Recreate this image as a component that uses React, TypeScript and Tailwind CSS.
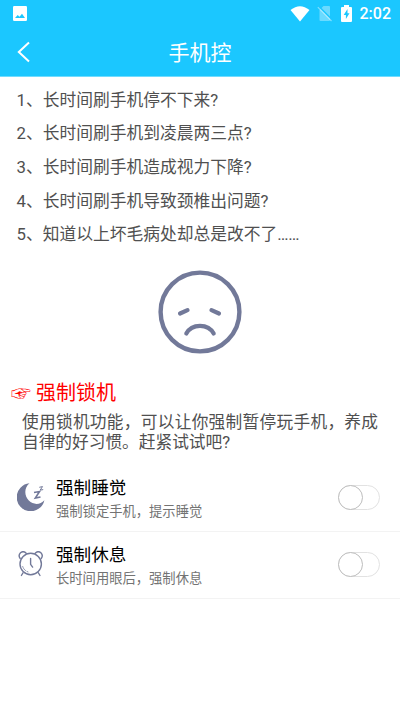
import React from 'react';

interface LockItem {
  title: string;
  desc: string;
  icon: React.ReactNode;
}

const HABITS = [
  '1、长时间刷手机停不下来?',
  '2、长时间刷手机到凌晨两三点?',
  '3、长时间刷手机造成视力下降?',
  '4、长时间刷手机导致颈椎出问题?',
  '5、知道以上坏毛病处却总是改不了……',
];

function StatusBar() {
  return (
    <div className="flex h-7 items-center justify-between pl-[13px] pr-[9px]">
      <svg width="14" height="15" viewBox="0 0 14 15" className="-mt-px">
        <rect width="14" height="15" rx="1.2" fill="#fff" />
        <path d="M2 12l2.700-3 1.800 1.700 2.500-3L12 12z" fill="#1bc7ff" />
      </svg>
      <div className="flex items-center text-white">
        <svg width="20" height="16" viewBox="0 0 20 16" className="-mt-px">
          <path d="M.5 4Q10-3.600 19.500 4L10 15.500z" fill="#fff" />
        </svg>
        <svg width="16" height="17" viewBox="0 0 16 17" className="-mt-[2px] ml-[7px]">
          <path d="M6.500 1H12q1 0 1 1v13q0 1-1 1H3.500q-1 0-1-1V5z" fill="#fff" opacity=".35" />
          <path d="M2 1.500l13 13" stroke="#1bc7ff" strokeWidth="1.500" />
          <path d="M.8 2.200L14.500 16" stroke="#fff" strokeWidth="1.100" opacity=".45" />
        </svg>
        <svg width="11" height="17" viewBox="0 0 11 17" className="-mt-[2px] ml-[8px]">
          <path d="M3 0h5v2h2q1 0 1 1v13q0 1-1 1H1q-1 0-1-1V3q0-1 1-1h2z" fill="#fff" />
          <path d="M6.500 4L2.700 10h2.200v4L8.500 8.300h-2z" fill="#1bc7ff" />
        </svg>
        <span className="ml-[8px] text-[16px] leading-5 font-medium">2:02</span>
      </div>
    </div>
  );
}

function SadFace() {
  return (
    <svg width="84" height="84" viewBox="0 0 84 84" fill="none" stroke="#727999" strokeLinecap="round">
      <circle cx="42" cy="42" r="39.400" strokeWidth="4.400" />
      <path d="M22 43.500l7.500-3.400M61 43.500l-7.500-3.400" strokeWidth="4.200" />
      <path d="M28.300 63.500c5.500-10.300 21.900-10.300 27.400 0" strokeWidth="4.200" />
    </svg>
  );
}

function MoonIcon() {
  return (
    <svg width="28" height="28" viewBox="0 0 28 28" fill="none">
      <path d="M12.500.3A14 14 0 1 0 27.400 17.200C23.500 21.800 16.500 22.300 11.800 17.600 6.800 12.500 7.300 4.300 12.500.3z" fill="#727999" />
      <path d="M17 9.500l5.500-1-4.200 6.500 5.200-1" stroke="#727999" strokeWidth="1.600" />
      <path d="M22.300 4.300l3.200-.7-2.300 3.500 3-.5" stroke="#727999" strokeWidth="1" />
    </svg>
  );
}

function AlarmIcon() {
  return (
    <svg width="26" height="26" viewBox="0 0 26 26" fill="none" stroke="#727999" strokeLinecap="round">
      <circle cx="12.700" cy="13" r="10.700" strokeWidth="1.400" />
      <path d="M2.200 7.500C-.8 3.500 4-1.800 8.200 2.200M23.200 7.500c3-4-1.800-9.300-6-5.300" strokeWidth="1.400" />
      <path d="M5 21.800l-1.600 2.700M20.400 21.800l1.600 2.700" strokeWidth="1.300" />
      <path d="M12.600 7.500v5.800l2 2.800" strokeWidth="1.400" />
      <path d="M4.700 15.500c.5 1.700 1.500 3.100 2.800 4M9 20.500l1 .4" strokeWidth=".8" />
    </svg>
  );
}

const ITEMS: LockItem[] = [
  { title: '强制睡觉', desc: '强制锁定手机，提示睡觉', icon: <MoonIcon /> },
  { title: '强制休息', desc: '长时间用眼后，强制休息', icon: <AlarmIcon /> },
];

function Toggle() {
  return (
    <button
      type="button"
      role="switch"
      aria-checked="false"
      className="mb-[2px] h-[25px] w-[42px] rounded-full border border-[#e2e2e2] bg-white"
    >
      <span className="-ml-px -mt-px block h-[25px] w-[25px] rounded-full border border-[#bdbdbd] bg-white" />
    </button>
  );
}

export default function App() {
  return (
    <div className="h-[711px] w-[400px] overflow-hidden bg-white font-[Roboto,'Noto_Sans_CJK_SC',sans-serif]">
      <header className="h-[77px] border-b border-[#70dcff] bg-[#1bc7ff]">
        <StatusBar />
        <div className="grid h-[48px] grid-cols-[40px_1fr_40px] items-center">
          <svg width="14" height="22" viewBox="0 0 14 22" className="ml-[17px]">
            <path d="M12 1.500L1.800 11 12 20.500" fill="none" stroke="#fff" strokeWidth="2" />
          </svg>
          <h1 className="mt-px text-center text-[21px] leading-[30px] text-white">手机控</h1>
        </div>
      </header>

      <ul className="pt-[6.500px] pl-[16.500px] text-[16.750px] text-[#505050]">
        {HABITS.map((habit) => (
          <li key={habit} className="h-[33.7px] leading-[33.7px] whitespace-nowrap">
            {habit}
          </li>
        ))}
      </ul>

      <div className="mt-[18px] flex justify-center">
        <SadFace />
      </div>

      <section className="mt-[24.500px]">
        <h2 className="flex h-[30px] items-center pl-[11px] text-[20px] text-[#ff0000]">
          <span className="-mt-px w-[25px] font-['Noto_Sans_CJK_JP','DejaVu_Sans'] text-[20px] leading-[30px]">☞</span>
          强制锁机
        </h2>
        <p className="mt-[5px] ml-[22px] w-[356px] text-justify text-[16.7px] leading-[19.500px] text-[#505050]">
          使用锁机功能，可以让你强制暂停玩手机，养成自律的好习惯。赶紧试试吧?
        </p>
      </section>

      <ul className="mt-[13px]">
        {ITEMS.map((item) => (
          <li key={item.title} className="flex h-[67px] items-center border-b border-[#f3f3f3] pr-[20px]">
            <div className="flex w-[56px] shrink-0 justify-center pb-[2px] pl-[5px]">{item.icon}</div>
            <div className="flex-1 pt-[2px]">
              <h3 className="text-[17.6px] leading-[25px] text-black">{item.title}</h3>
              <p className="text-[13.3px] leading-[21px] text-[#737373]">{item.desc}</p>
            </div>
            <Toggle />
          </li>
        ))}
      </ul>
    </div>
  );
}
